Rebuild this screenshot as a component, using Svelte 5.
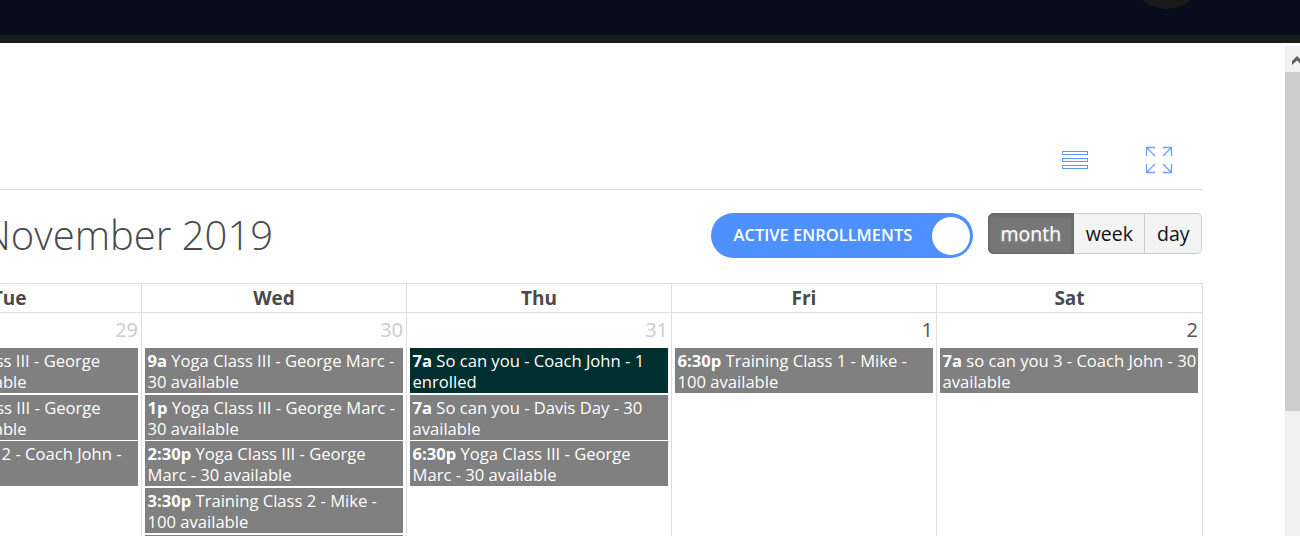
<script>
  const yoga = 'Yoga Class III - George Marc - 30 available';

  const columns = [
    {
      name: 'Tue', day: 29, muted: true,
      events: [
        { time: '9:30a', title: yoga },
        { time: '2:30p', title: yoga },
        { time: '10a', title: 'Yoga Class 2 - Coach John - 100 available' }
      ]
    },
    {
      name: 'Wed', day: 30, muted: true,
      events: [
        { time: '9a', title: yoga },
        { time: '1p', title: yoga },
        { time: '2:30p', title: yoga },
        { time: '3:30p', title: 'Training Class 2 - Mike - 100 available' },
        { time: '5p', title: yoga }
      ]
    },
    {
      name: 'Thu', day: 31, muted: true,
      events: [
        { time: '7a', title: 'So can you - Coach John - 1 enrolled', enrolled: true },
        { time: '7a', title: 'So can you - Davis Day - 30 available' },
        { time: '6:30p', title: yoga }
      ]
    },
    {
      name: 'Fri', day: 1,
      events: [{ time: '6:30p', title: 'Training Class 1 - Mike - 100 available' }]
    },
    {
      name: 'Sat', day: 2,
      events: [{ time: '7a', title: 'so can you 3 - Coach John - 30 available' }]
    }
  ];

  const views = ['month', 'week', 'day'];
</script>

<div class="page">
  <header class="topbar">
    <div class="avatar"></div>
  </header>

  <div class="body">
    <main class="content">
      <div class="tools">
        <svg width="28" height="20" viewBox="0 0 28 20" fill="none" stroke="#5f96ff" stroke-width="1">
          <rect x="1.5" y="1.5" width="25" height="3" />
          <rect x="1.5" y="8.5" width="25" height="3" />
          <rect x="1.5" y="15.5" width="25" height="3" />
        </svg>
        <svg width="28" height="28" viewBox="0 0 28 28" fill="none" stroke="#6f9eff" stroke-width="1.3">
          <path d="M10 1.5H1.5V10M1.5 1.5L10 10" />
          <path d="M18 1.5H26.5V10M26.5 1.5L18 10" />
          <path d="M1.5 18V26.5H10M1.5 26.5L10 18" />
          <path d="M26.5 18V26.5H18M26.5 26.5L18 18" />
        </svg>
      </div>

      <div class="toolbar">
        <h1>November 2019</h1>
        <div class="controls">
          <div class="switch">
            <span>ACTIVE ENROLLMENTS</span>
            <i class="knob"></i>
          </div>
          <div class="views">
            {#each views as view, i}
              <button class:active={i === 0}>{view}</button>
            {/each}
          </div>
        </div>
      </div>

      <div class="calendar">
        {#each columns as col}
          <div class="col">
            <div class="head">{col.name}</div>
            <div class="cell">
              <div class="date" class:muted={col.muted}>{col.day}</div>
              {#each col.events as ev}
                <div class="event" class:enrolled={ev.enrolled}>
                  <b>{ev.time}</b> {ev.title}
                </div>
              {/each}
            </div>
          </div>
        {/each}
      </div>
    </main>

    <div class="scrollbar">
      <div class="arrow">
        <svg width="15" height="26" viewBox="0 0 15 26"><path d="M7 15L12 10L17 15V19L12 14.5L7 19Z" fill="#606060" /></svg>
      </div>
      <div class="thumb"></div>
    </div>
  </div>
</div>

<style>
  :global(body) {
    margin: 0;
    overflow: hidden;
    background: #fff;
  }

  .page {
    width: 1300px;
    height: 536px;
    overflow: hidden;
    font-family: "Open Sans", sans-serif;
    display: flex;
    flex-direction: column;
  }

  .topbar {
    height: 35px;
    flex: none;
    background: #070d1a;
    border-bottom: 8px solid #1a1a1a;
    position: relative;
    overflow: hidden;
  }

  .avatar {
    position: absolute;
    left: 1130px;
    top: -64px;
    width: 73px;
    height: 73px;
    border-radius: 50%;
    background: #1a1a1a;
  }

  .body {
    flex: 1;
    display: flex;
    min-height: 0;
  }

  .content {
    width: 1285px;
    flex: none;
    overflow: hidden;
  }

  .tools {
    width: 1202px;
    height: 147px;
    box-sizing: border-box;
    padding: 103px 29px 0 0;
    border-bottom: 1px solid #ddd;
    display: flex;
    justify-content: flex-end;
    gap: 56px;
  }

  .tools svg {
    align-self: flex-start;
  }

  .tools svg:first-child {
    margin-top: 4px;
  }

  .toolbar {
    width: 1202px;
    height: 93px;
    display: flex;
    justify-content: space-between;
    align-items: flex-start;
  }

  h1 {
    margin: 19px 0 0 -18px;
    font-size: 40px;
    font-weight: 300;
    line-height: 52px;
    color: #4a4a4a;
    white-space: nowrap;
  }

  .controls {
    display: flex;
    gap: 15px;
    margin-top: 23px;
  }

  .switch {
    width: 262px;
    height: 45px;
    box-sizing: border-box;
    padding: 0 3px 0 23px;
    border-radius: 23px;
    background: #4d90fe;
    display: flex;
    align-items: center;
    justify-content: space-between;
    color: #fff;
    font-size: 16.5px;
    font-weight: 600;
    white-space: nowrap;
  }

  .switch span {
    margin-bottom: 2px;
  }

  .knob {
    width: 38px;
    height: 38px;
    border-radius: 50%;
    background: #fff;
  }

  .views {
    display: flex;
    height: 41px;
  }

  .views button {
    font: 19.5px/1 "Open Sans", sans-serif;
    padding: 0 11.5px;
    background: #f3f3f3;
    color: #111;
    border: 1px solid #ccc;
    border-left: 0;
  }

  .views button:first-child {
    border-left: 1px solid #666;
    border-radius: 5px 0 0 5px;
    padding: 0 12px;
  }

  .views button:last-child {
    border-radius: 0 5px 5px 0;
  }

  .views button.active {
    background: #777;
    border-color: #666;
    color: #fff;
    text-shadow: 0 1px 2px rgba(255, 255, 255, 0.5);
    box-shadow: inset 0 2px 4px rgba(0, 0, 0, 0.15);
  }

  .calendar {
    display: grid;
    grid-template-columns: repeat(5, 265px);
    width: 1325px;
    margin-left: -123px;
  }

  .col {
    border-right: 1px solid #ddd;
    box-sizing: border-box;
  }

  .col:last-child {
    width: 266px;
  }

  .col:last-child .cell {
    padding-right: 4px;
  }

  .head {
    height: 30px;
    box-sizing: border-box;
    border-top: 1px solid #ddd;
    border-bottom: 1px solid #ddd;
    text-align: center;
    font-size: 19px;
    font-weight: 700;
    line-height: 29px;
    color: #4a4a4a;
  }

  .cell {
    padding: 0 3px;
  }

  .date {
    height: 35px;
    text-align: right;
    font-size: 20px;
    line-height: 34px;
    color: #555;
  }

  .date.muted {
    color: #ccc;
  }

  .event {
    margin-bottom: 1.7px;
    padding: 2px 0 0 2.5px;
    background: #808080;
    color: #fff;
    font-size: 16.6px;
    line-height: 21px;
    height: 45px;
    box-sizing: border-box;
  }

  .event.enrolled {
    background: #002f2f;
  }

  .scrollbar {
    width: 15px;
    flex: none;
    margin-top: 3px;
    background: #f0f0f0;
    display: flex;
    flex-direction: column;
    overflow: hidden;
  }

  .arrow {
    height: 26px;
    flex: none;
  }

  .arrow svg {
    display: block;
    overflow: hidden;
  }

  .thumb {
    height: 339px;
    flex: none;
    background: #cdcdcd;
  }
</style>
